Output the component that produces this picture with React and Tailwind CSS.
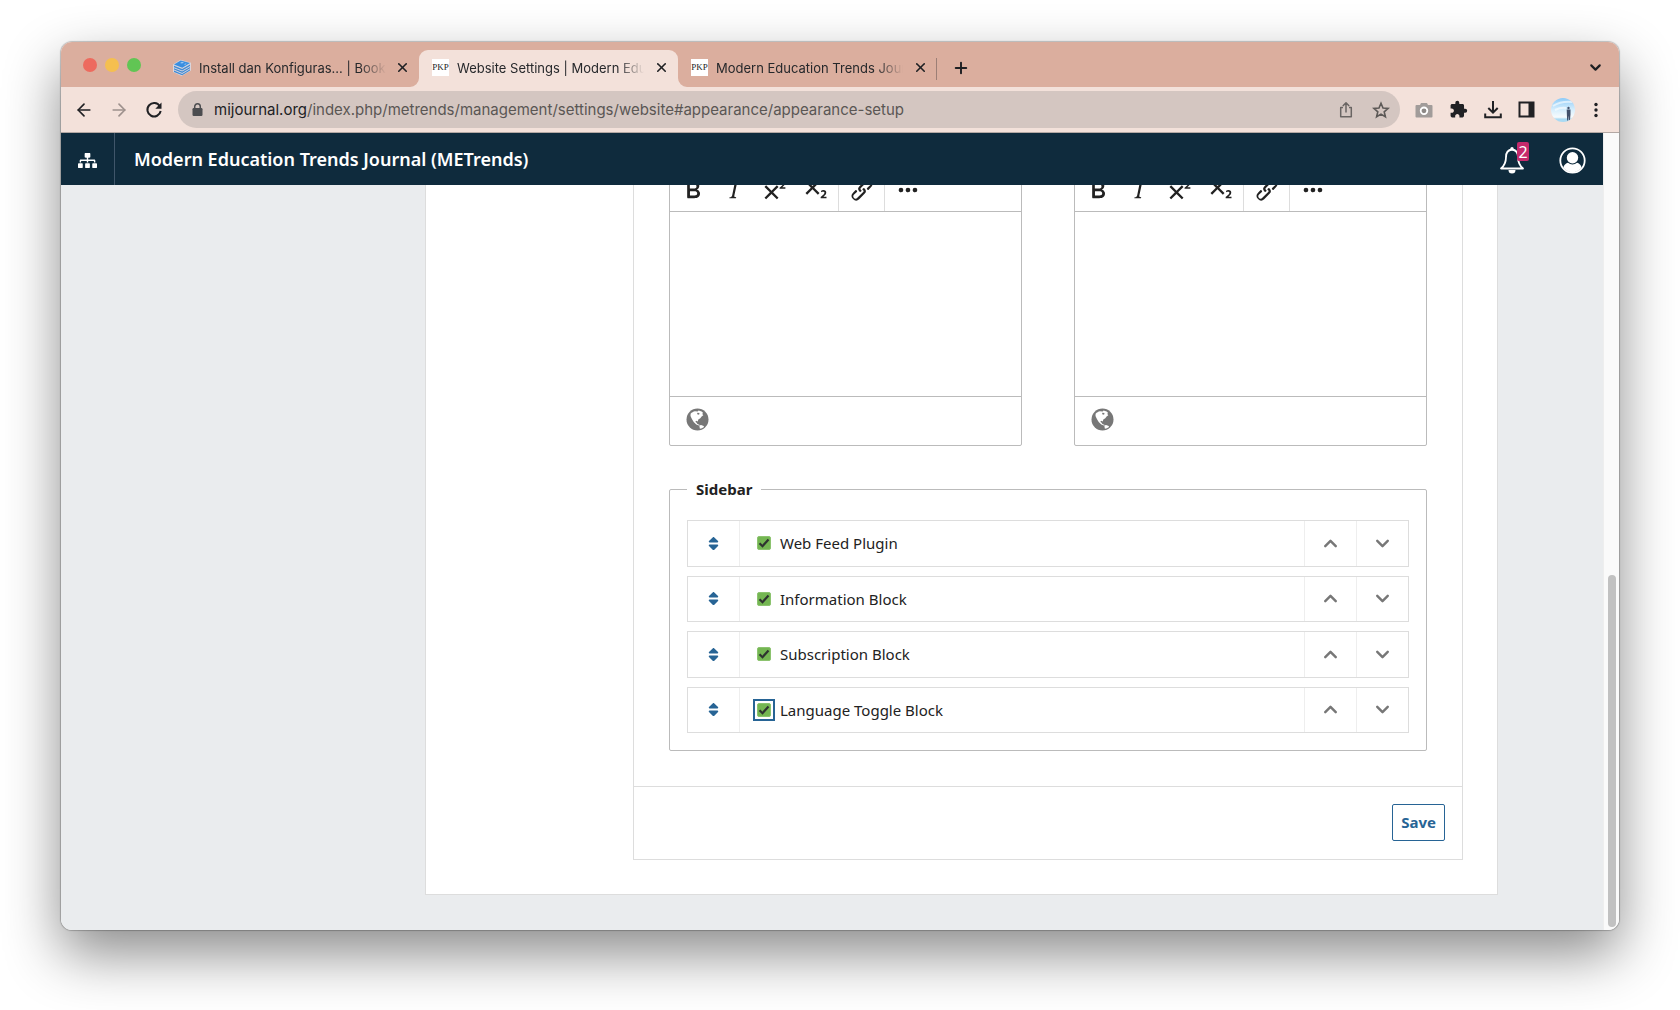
import React, { useState } from 'react';
import { FaSitemap, FaSort } from 'react-icons/fa';
import { MdExtension } from 'react-icons/md';
import { ArrowLeft, ArrowRight, ChevronDown, ChevronUp, Plus, X } from 'lucide-react';

const editorIcons = {
    Bold: 'M7.8 19c-.3 0-.5 0-.6-.2l-.2-.5V5.7c0-.2 0-.4.2-.5l.6-.2h5c1.5 0 2.7.3 3.5 1 .7.6 1.1 1.4 1.1 2.5a3 3 0 01-.6 1.9c-.4.6-1 1-1.6 1.2.4.1.9.3 1.3.6s.8.7 1 1.2c.4.4.5 1 .5 1.6 0 1.3-.4 2.3-1.3 3-.8.7-2.1 1-3.8 1H7.8zm5-8.3c.6 0 1.2-.1 1.6-.5.4-.3.6-.7.6-1.3 0-1.1-.8-1.7-2.3-1.7H9.3v3.5h3.4zm.5 6c.7 0 1.3-.1 1.7-.4.4-.4.6-.9.6-1.5s-.2-1-.7-1.4c-.4-.3-1-.4-2-.4H9.4v3.8h4z',
    Italic: 'M16.7 4.7l-.1.9h-.3c-.6 0-1 0-1.4.3-.3.3-.4.6-.5 1.1l-2.1 9.8v.6c0 .5.4.8 1.4.8h.2l-.2.8H8l.2-.8h.2c1.1 0 1.8-.5 2-1.5l2-9.8.1-.5c0-.6-.4-.8-1.4-.8h-.3l.2-.9h5.8z',
    Superscript: 'M15 9.4L10.4 14l4.6 4.6-1.4 1.4L9 15.4 4.4 20 3 18.6 7.6 14 3 9.4 4.4 8 9 12.6 13.6 8 15 9.4zm5.9 1.6h-5v-1l1-.8 1.7-1.6c.3-.5.5-.9.5-1.3 0-.3 0-.5-.2-.7-.2-.2-.5-.3-.9-.3l-.8.2-.7.4-.4-1.2c.2-.2.6-.4 1-.5.3-.2.8-.2 1.2-.2.8 0 1.4.2 1.8.6.4.4.6 1 .6 1.6 0 .5-.2 1-.5 1.5l-1.3 1.4-.6.5h2.6V11z',
    Subscript: 'M10.4 10l4.6 4.6-1.4 1.4L9 11.4 4.4 16 3 14.6 7.6 10 3 5.4 4.4 4 9 8.6 13.6 4 15 5.4 10.4 10zM21 19h-5v-1l1-.8 1.7-1.6c.3-.4.5-.8.5-1.2 0-.3 0-.6-.2-.7-.2-.2-.5-.3-.9-.3a2 2 0 00-.8.2l-.7.3-.4-1.1 1-.6 1.2-.2c.8 0 1.4.3 1.8.7.4.4.6.9.6 1.5s-.2 1.1-.5 1.6a8 8 0 01-1.3 1.3l-.6.6h2.6V19z',
    Link: 'M6.2 12.3a1 1 0 011.4 1.4l-2.1 2a2 2 0 102.7 2.8l4.8-4.8a1 1 0 000-1.4 1 1 0 111.4-1.3 2.9 2.9 0 010 4L9.6 20a3.9 3.9 0 01-5.5-5.5l2-2zm11.6-.6a1 1 0 01-1.4-1.4l2-2a2 2 0 10-2.6-2.8L11 10.3a1 1 0 000 1.4A1 1 0 119.6 13a2.9 2.9 0 010-4L14.4 4a3.9 3.9 0 015.5 5.5l-2 2z',
    More: 'M6 10a2 2 0 00-2 2c0 1.1.9 2 2 2a2 2 0 002-2 2 2 0 00-2-2zm12 0a2 2 0 00-2 2c0 1.1.9 2 2 2a2 2 0 002-2 2 2 0 00-2-2zm-6 0a2 2 0 00-2 2c0 1.1.9 2 2 2a2 2 0 002-2 2 2 0 00-2-2z',
};

const initialBlocks = [
    { id: 'webfeed', title: 'Web Feed Plugin', enabled: true },
    { id: 'information', title: 'Information Block', enabled: true },
    { id: 'subscription', title: 'Subscription Block', enabled: true },
    { id: 'language', title: 'Language Toggle Block', enabled: true, focused: true },
];

function PkpIcon() {
    return (
        <span className="flex h-[17px] w-[17px] shrink-0 items-center justify-center bg-white font-['Liberation_Serif',serif] text-[9px] leading-none text-[#222]">PKP</span>
    );
}

function BooksIcon() {
    return (
        <svg className="h-[17px] w-[18px] shrink-0" viewBox="0 0 18 17">
            <path d="M0 5.500 7.500.700l10.500 3v7.800L8.500 17 0 13z" fill="#d9d5dc" />
            <path d="M1 5.500 7.700 1.500l9.300 2.500-7.700 4.700z" fill="#3a8ee0" />
            <path d="m1 6.800 8.200 3.300L17 5.500v1.400l-7.800 4.600L1 8.200zM1 9.200l8.200 3.300L17 7.900v1.400l-7.800 4.600L1 10.600zM1 11.600l8.200 3.300 7.800-4.600v1.200l-7.800 4.800L1 12.900z" fill="#3f8bd6" />
            <path d="m7 4 2-1.200 2 .6L9 4.600zM11 5.300l1.500-.9 1.200.4-1.500.9z" fill="#9cc8f3" />
        </svg>
    );
}

function GlobeIcon() {
    return (
        <svg width="23" height="23" viewBox="0 0 23 23">
            <circle cx="11.500" cy="11.500" r="11" fill="#777" />
            <path d="M4.600 5.800C5.800 4.300 7.300 3.600 9 3.200l2.600.2 1-.8 3 .8 1.400 1.300-.7 1.300 1 1.200-1.700 1.200-1.300 1.900-2 1.300-.5 1.900-1.500-.8-1 1 1.300 1 .8 1.400 2.400.8-1 .7-2.500-1-2.600-2.700L5.900 11 4.500 8z" fill="#fff" />
            <path d="m11.300 4.700 2.200.3-.4 1.700-1.900-.4z" fill="#777" />
            <path d="m13.300 17.500 1.700-.6 2.700 1 .3 1-2 1.300-2.100.5z" fill="#fff" />
        </svg>
    );
}

function Tab({ title, icon, active }) {
    return (
        <div className={`relative flex w-[259px] shrink-0 items-center gap-2 rounded-t-[9px] pr-2 pb-[2px] pl-[13px] ${active ? 'bg-[#f3e1da]' : ''}`}>
            {active && (
                <>
                    <svg className="absolute bottom-0 -left-[9px] size-[9px]" viewBox="0 0 9 9"><path d="M9 0v9H0a9 9 0 0 0 9-9z" fill="#f3e1da" /></svg>
                    <svg className="absolute -right-[9px] bottom-0 size-[9px]" viewBox="0 0 9 9"><path d="M0 0v9h9a9 9 0 0 1-9-9z" fill="#f3e1da" /></svg>
                </>
            )}
            {icon}
            <span className="w-[187px] text-[13px] leading-5 whitespace-nowrap text-[#26282b] [mask-image:linear-gradient(to_right,black_86%,transparent)]">{title}</span>
            <button aria-label="Close tab" className="flex flex-1 items-center justify-center text-[#1f2023]"><X size={15} strokeWidth={2.6} /></button>
        </div>
    );
}

function BrowserTabs() {
    return (
        <div className="flex h-[45px] shrink-0 bg-[#dbae9e] pt-2">
            <div className="flex w-[99px] shrink-0 items-center gap-2 pb-2 pl-[22px]">
                <span className="size-[14px] rounded-full bg-[#ed6a5e]" />
                <span className="size-[14px] rounded-full bg-[#f5bf4f]" />
                <span className="size-[14px] rounded-full bg-[#61c554]" />
            </div>
            <Tab title="Install dan Konfiguras... | Book" icon={<BooksIcon />} />
            <Tab title="Website Settings | Modern Edu" icon={<PkpIcon />} active />
            <div className="flex items-center">
                <Tab title="Modern Education Trends Jour" icon={<PkpIcon />} />
                <span className="-ml-px h-[22px] w-px bg-[#9c7f76]" />
                <button aria-label="New tab" className="ml-[15px] pb-[2px] text-[#1f2023]"><Plus size={18} strokeWidth={2.6} /></button>
            </div>
            <button aria-label="Search tabs" className="mr-[15px] ml-auto pb-[2px] text-[#1f2023]"><ChevronDown size={17} strokeWidth={3} /></button>
        </div>
    );
}

function AddressBar() {
    return (
        <div className="flex h-[46px] shrink-0 items-center border-b border-[#b3a8a4] bg-[#f3e1da] pr-[18px] pl-[13px] text-[#202124]">
            <button aria-label="Back"><ArrowLeft size={20} /></button>
            <button aria-label="Forward" className="ml-[15px] text-[#9d918d]"><ArrowRight size={20} /></button>
            <button aria-label="Reload" className="ml-[15px]">
                <svg width="20" height="20" viewBox="0 0 20 20" fill="none">
                    <path d="M15.800 6.200A6.700 6.700 0 1 0 16.700 11" stroke="currentColor" strokeWidth="2" />
                    <path d="M17.500 2.500v6.200h-6.200z" fill="currentColor" />
                </svg>
            </button>
            <div className="ml-[14px] flex h-[37px] flex-1 items-center rounded-full bg-[#d4c6c1] pr-[10px] pl-[14px]">
                <svg width="11" height="14" viewBox="0 0 11 14" className="shrink-0">
                    <rect x=".5" y="5" width="10" height="8" rx="1.200" fill="#4c4d50" />
                    <path d="M2.700 6V3.600a2.800 2.800 0 0 1 5.600 0V6" fill="none" stroke="#4c4d50" strokeWidth="1.500" />
                </svg>
                <a href="#appearance" className="ml-[11px] flex-1 text-[15px] leading-5 whitespace-nowrap text-[#5a5654]">
                    <span className="text-[#202124]">mijournal.org</span>/index.php/metrends/management/settings/website#appearance/appearance-setup
                </a>
                <button aria-label="Share" className="text-[#6a6563]">
                    <svg width="18" height="18" viewBox="0 0 18 18" fill="none" stroke="currentColor" strokeWidth="1.500">
                        <path d="M6 6.500H3.700v9.300h10.600V6.500H12M9 11.500V2M5.800 5 9 1.800 12.200 5" strokeLinejoin="round" />
                    </svg>
                </button>
                <button aria-label="Bookmark" className="ml-[17px] text-[#5d5957]">
                    <svg width="18" height="18" viewBox="0 0 18 18" fill="none" stroke="currentColor" strokeWidth="1.600">
                        <path d="m9 2.300 2 4.700 5.100.4-3.900 3.400 1.200 5L9 13.100l-4.400 2.700 1.200-5-3.900-3.400L7 7z" />
                    </svg>
                </button>
            </div>
            <div className="ml-[15px] flex items-center gap-4">
                <button aria-label="Screenshot">
                    <svg width="18" height="18" viewBox="0 0 18 18">
                        <path d="M6 2h6l1 2h3.500q1 0 1 1v10.500q0 1-1 1h-15q-1 0-1-1V5q0-1 1-1H5z" fill="#a19c9a" />
                        <circle cx="9" cy="9.800" r="3.300" fill="#8d8987" stroke="#fff" strokeWidth="1.800" />
                    </svg>
                </button>
                <button aria-label="Extensions"><MdExtension size={19} /></button>
                <button aria-label="Downloads">
                    <svg width="18" height="18" viewBox="0 0 18 18" fill="none" stroke="currentColor" strokeWidth="2">
                        <path d="M9 0v11M4.300 7 9 11.700 13.700 7M1.200 12.500v3.800h15.600v-3.800" />
                    </svg>
                </button>
                <button aria-label="Side panel">
                    <svg width="17" height="17" viewBox="0 0 17 17">
                        <path d="M1.500 1.500h14v14h-14z" fill="none" stroke="currentColor" strokeWidth="2" />
                        <path d="M10.500 1h5v15h-5z" fill="currentColor" />
                    </svg>
                </button>
                <button aria-label="Profile">
                    <svg width="24" height="24" viewBox="0 0 24 24">
                        <defs>
                            <linearGradient id="sky" x2="0" y2="1"><stop stopColor="#8ecbf8" /><stop offset=".5" stopColor="#d8effd" /><stop offset=".8" stopColor="#f7fbfd" /><stop offset=".88" stopColor="#a9daf3" /></linearGradient>
                            <clipPath id="face"><circle cx="12" cy="12" r="12" /></clipPath>
                        </defs>
                        <g clipPath="url(#face)">
                            <path d="M0 0h24v24H0z" fill="url(#sky)" />
                            <path d="M2 8q8-5 19-4M4 12q6-3 11-2" stroke="#fff" strokeWidth="2" fill="none" opacity=".6" />
                            <circle cx="17.500" cy="10" r="1.200" fill="#42506a" />
                            <path d="M15.700 11.500h3.800v5l-.6 6h-1l-.4-5-.4 5h-1z" fill="#42506a" />
                        </g>
                    </svg>
                </button>
                <button aria-label="Menu">
                    <svg width="10" height="16" viewBox="0 0 10 16" fill="currentColor"><circle cx="5" cy="2.500" r="1.700" /><circle cx="5" cy="8" r="1.700" /><circle cx="5" cy="13.500" r="1.700" /></svg>
                </button>
            </div>
        </div>
    );
}

function TopNav() {
    return (
        <header className="flex h-[52px] shrink-0 items-center bg-[#0f2b3d] text-white">
            <button aria-label="Journals" className="flex h-full w-[54px] items-center justify-center border-r border-[#40566a] pt-[2px]"><FaSitemap size={19} /></button>
            <h1 className="ml-[19px] flex-1 text-[18px] leading-6 font-semibold">Modern Education Trends Journal (METrends)</h1>
            <button aria-label="Notifications" className="relative mr-[34px] pt-[2px]">
                <svg width="26" height="28" viewBox="0 0 26 28">
                    <path d="M13 3.500c-4 .5-6 3.500-6 7.500 0 6-2 9-5 11.500h22c-3-2.500-5-5.500-5-11.500 0-4-2-7-6-7.500z" fill="none" stroke="#fff" strokeWidth="1.800" strokeLinejoin="round" />
                    <circle cx="13" cy="2.800" r="1.700" fill="#fff" />
                    <path d="M9.500 24h7a3.500 3.500 0 0 1-7 0z" fill="#fff" />
                </svg>
                <span className="absolute -top-[2px] -right-1 flex h-[19px] w-3 items-center justify-center rounded-[2px] bg-[#c52a6b] text-[16px] leading-none">2</span>
            </button>
            <button aria-label="Account" className="mr-[17px] pt-[2px]">
                <svg width="27" height="27" viewBox="0 0 27 27">
                    <defs><clipPath id="user"><circle cx="13.500" cy="13.500" r="11.500" /></clipPath></defs>
                    <circle cx="13.500" cy="13.500" r="12.200" fill="none" stroke="#fff" strokeWidth="1.800" />
                    <g clipPath="url(#user)" fill="#fff">
                        <circle cx="13.500" cy="10.800" r="5.700" />
                        <path d="M4 24c0-6 2.500-7.500 5-8.300a6.500 6.500 0 0 0 9 0c2.500.8 5 2.300 5 8.300v4H4z" />
                    </g>
                </svg>
            </button>
        </header>
    );
}

function EditorButton({ name }) {
    return (
        <button aria-label={name} className="flex h-[41px] w-[41px] items-center justify-center">
            <svg width="28" height="28" viewBox="0 0 24 24" fill="#222"><path d={editorIcons[name]} /></svg>
        </button>
    );
}

function Editor({ label }) {
    return (
        <div className="rounded-[2px] border border-[#bbb]">
            <div className="flex h-[46px] items-stretch border-b border-[#bbb] pt-[2px]">
                <div className="flex items-center border-r border-[#ddd] px-[2px]">
                    {['Bold', 'Italic', 'Superscript', 'Subscript'].map((name) => <EditorButton key={name} name={name} />)}
                </div>
                <div className="flex items-center border-r border-[#ddd] px-[2px]"><EditorButton name="Link" /></div>
                <div className="flex items-center px-[2px]"><EditorButton name="More" /></div>
            </div>
            <textarea aria-label={label} className="block h-[184px] w-full resize-none p-4 text-[15px] outline-none" />
            <div className="flex h-[49px] items-center border-t border-[#bbb] px-4 pb-1">
                <button aria-label={`Translate ${label}`}><GlobeIcon /></button>
            </div>
        </div>
    );
}

function BlockRow({ block, onToggle, onMove }) {
    return (
        <li className="flex items-stretch border border-[#ddd]">
            <button aria-label={`Drag ${block.title}`} className="flex w-[52px] items-center justify-center border-r border-[#eee] text-[#276495]"><FaSort size={17} /></button>
            <label className="flex flex-1 items-center gap-[9px] pl-[17px] text-[15px] leading-6">
                <span className={`relative flex size-[14px] ${block.focused ? 'outline-2 outline-offset-[2px] outline-[#276495]' : ''}`}>
                    <input
                        type="checkbox"
                        checked={block.enabled}
                        onChange={() => onToggle(block.id)}
                        className="size-[14px] appearance-none rounded-[2px] border border-[#999] checked:border-[#8cc36f] checked:bg-[#74b652]"
                    />
                    {block.enabled && (
                        <svg className="pointer-events-none absolute inset-0" width="14" height="14" viewBox="0 0 14 14"><path d="m2.500 7.300 3 2.900L11.500 3.500" fill="none" stroke="#2e3330" strokeWidth="2.200" /></svg>
                    )}
                </span>
                {block.title}
            </label>
            <button aria-label={`Move ${block.title} up`} onClick={() => onMove(block.id, -1)} className="flex w-[52px] items-center justify-center border-l border-[#eee] text-[#777]"><ChevronUp size={21} strokeWidth={2.800} /></button>
            <button aria-label={`Move ${block.title} down`} onClick={() => onMove(block.id, 1)} className="flex w-[52px] items-center justify-center border-l border-[#eee] text-[#777]"><ChevronDown size={21} strokeWidth={2.800} /></button>
        </li>
    );
}

function AppearanceForm() {
    const [blocks, setBlocks] = useState(initialBlocks);

    const toggle = (id) => setBlocks(blocks.map((b) => (b.id === id ? { ...b, enabled: !b.enabled } : b)));

    const move = (id, step) => {
        const from = blocks.findIndex((b) => b.id === id);
        const to = from + step;
        if (to < 0 || to >= blocks.length) return;
        const next = [...blocks];
        [next[from], next[to]] = [next[to], next[from]];
        setBlocks(next);
    };

    return (
        <form onSubmit={(e) => e.preventDefault()} className="border border-[#ddd]">
            <div className="px-[35px] pt-10 pb-[35px]">
                <div className="grid grid-cols-2 gap-[52px]">
                    <Editor label="Page Footer" />
                    <Editor label="Page Footer translation" />
                </div>

                {/* Sidebar blocks */}
                <fieldset className="mt-[31px] min-w-0 rounded-[2px] border border-[#bbb] px-[17px] pt-[19px] pb-[17px]">
                    <legend className="px-[9px] text-[15px] leading-6 font-bold">Sidebar</legend>
                    <ul className="grid h-[213px] auto-rows-fr gap-[9px]">
                        {blocks.map((block) => <BlockRow key={block.id} block={block} onToggle={toggle} onMove={move} />)}
                    </ul>
                </fieldset>
            </div>
            <div className="flex h-[73px] items-center justify-end border-t border-[#ddd] pr-[17px] pb-[2px]">
                <button className="h-[37px] rounded-[2px] border border-[#276495] px-2 text-[15px] leading-6 font-bold text-[#276495]">Save</button>
            </div>
        </form>
    );
}

export default function App() {
    return (
        <div className="h-screen bg-white px-[61px] pt-[42px] pb-20 font-['Inter',sans-serif]">
            <div className="flex h-full flex-col overflow-hidden rounded-[11px] shadow-[0_0_1px_1px_rgba(0,0,0,0.22),0_24px_56px_rgba(0,0,0,0.46)]">
                <BrowserTabs />
                <AddressBar />
                <div className="flex min-h-0 flex-1">
                    <div className="flex min-w-0 flex-1 flex-col bg-[#eaecee] font-['Noto_Sans',sans-serif] text-[#222]">
                        <TopNav />
                        {/* scrolled to the end of the page */}
                        <main className="flex min-h-0 flex-1 flex-col justify-end overflow-hidden pr-[105px] pb-[35px] pl-[364px]">
                            <div className="shrink-0 border border-[#ddd] bg-white pt-9 pr-[34px] pb-[34px] pl-[207px]">
                                <AppearanceForm />
                            </div>
                        </main>
                    </div>
                    <div className="flex w-4 shrink-0 flex-col justify-end border-l border-[#eee] bg-[#fafafa] pr-[3px] pb-[3px] pl-1">
                        <div className="h-[352px] rounded-full bg-[#c1c1c1]" />
                    </div>
                </div>
            </div>
        </div>
    );
}
